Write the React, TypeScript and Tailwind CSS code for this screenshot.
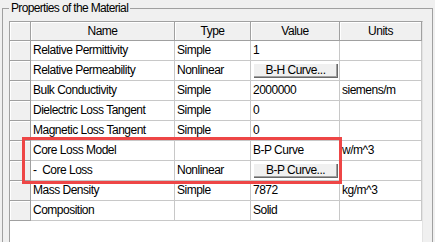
import React from "react";

type Row = {
  name: string;
  type?: string;
  value?: string;
  button?: string;
  units?: string;
};

const rows: Row[] = [
  { name: "Relative Permittivity", type: "Simple", value: "1" },
  { name: "Relative Permeability", type: "Nonlinear", button: "B-H Curve..." },
  { name: "Bulk Conductivity", type: "Simple", value: "2000000", units: "siemens/m" },
  { name: "Dielectric Loss Tangent", type: "Simple", value: "0" },
  { name: "Magnetic Loss Tangent", type: "Simple", value: "0" },
  { name: "Core Loss Model", type: "", value: "B-P Curve", units: "w/m^3" },
  { name: "-  Core Loss", type: "Nonlinear", button: "B-P Curve..." },
  { name: "Mass Density", type: "Simple", value: "7872", units: "kg/m^3" },
  { name: "Composition", type: "", value: "Solid" },
];

const cols = "grid grid-cols-[21px_144px_76px_89px_82px]";

function HeaderCell({ children }: { children?: React.ReactNode }) {
  return (
    <div className="h-[19px] bg-[#f0f0f0] border-r border-b border-[#a0a0a0] shadow-[inset_1px_1px_0_#ffffff] flex justify-center leading-[18px]">
      {children}
    </div>
  );
}

function Cell({ children }: { children?: React.ReactNode }) {
  return (
    <div className="h-[20px] bg-white border-r border-b border-[#c8c8c8] pl-[2px] leading-[19px] whitespace-pre overflow-hidden">
      {children}
    </div>
  );
}

function Btn({ label }: { label: string }) {
  return (
    <div className="mt-[2px] w-[85px] h-[15px] bg-[#f0f0f0] text-center leading-[15px] shadow-[inset_1px_1px_0_#ffffff,inset_-1px_-1px_0_#696969,inset_-2px_-2px_0_#a0a0a0]">
      {label}
    </div>
  );
}

export default function App() {
  return (
    <div className="w-[435px] h-[242px] overflow-hidden bg-[#f0f0f0] text-black text-[12px] tracking-[-0.5px] font-['Liberation_Sans',Arial,sans-serif]">
      <fieldset className="ml-[2px] w-[431px] h-[300px] border border-[#a0a0a0] pl-[6px] pt-[4px]">
        <legend className="px-[2px] leading-[17px] tracking-[-0.65px]">Properties of the Material</legend>
        <div className="relative w-[414px] h-[260px] bg-white border-t border-l border-r border-t-[#a0a0a0] border-l-[#a0a0a0] border-r-[#e3e3e3]">
          <div className={cols}>
            <HeaderCell />
            <HeaderCell>Name</HeaderCell>
            <HeaderCell>Type</HeaderCell>
            <HeaderCell>Value</HeaderCell>
            <HeaderCell>Units</HeaderCell>
          </div>
          {rows.map((r, i) => (
            <div key={i} className={cols}>
              <div className="h-[20px] bg-[#f0f0f0] border-r border-b border-[#a0a0a0] shadow-[inset_1px_1px_0_#ffffff]" />
              <Cell>{r.name}</Cell>
              <Cell>{r.type}</Cell>
              {r.button ? (
                <div className="h-[20px] bg-white border-r border-b border-[#c8c8c8] pl-[2px]">
                  <Btn label={r.button} />
                </div>
              ) : (
                <Cell>{r.value}</Cell>
              )}
              <Cell>{r.units}</Cell>
            </div>
          ))}
          <div className="absolute left-[12px] top-[115px] w-[320px] h-[47px] border-[3px] border-[#ee4646]" />
        </div>
      </fieldset>
    </div>
  );
}
